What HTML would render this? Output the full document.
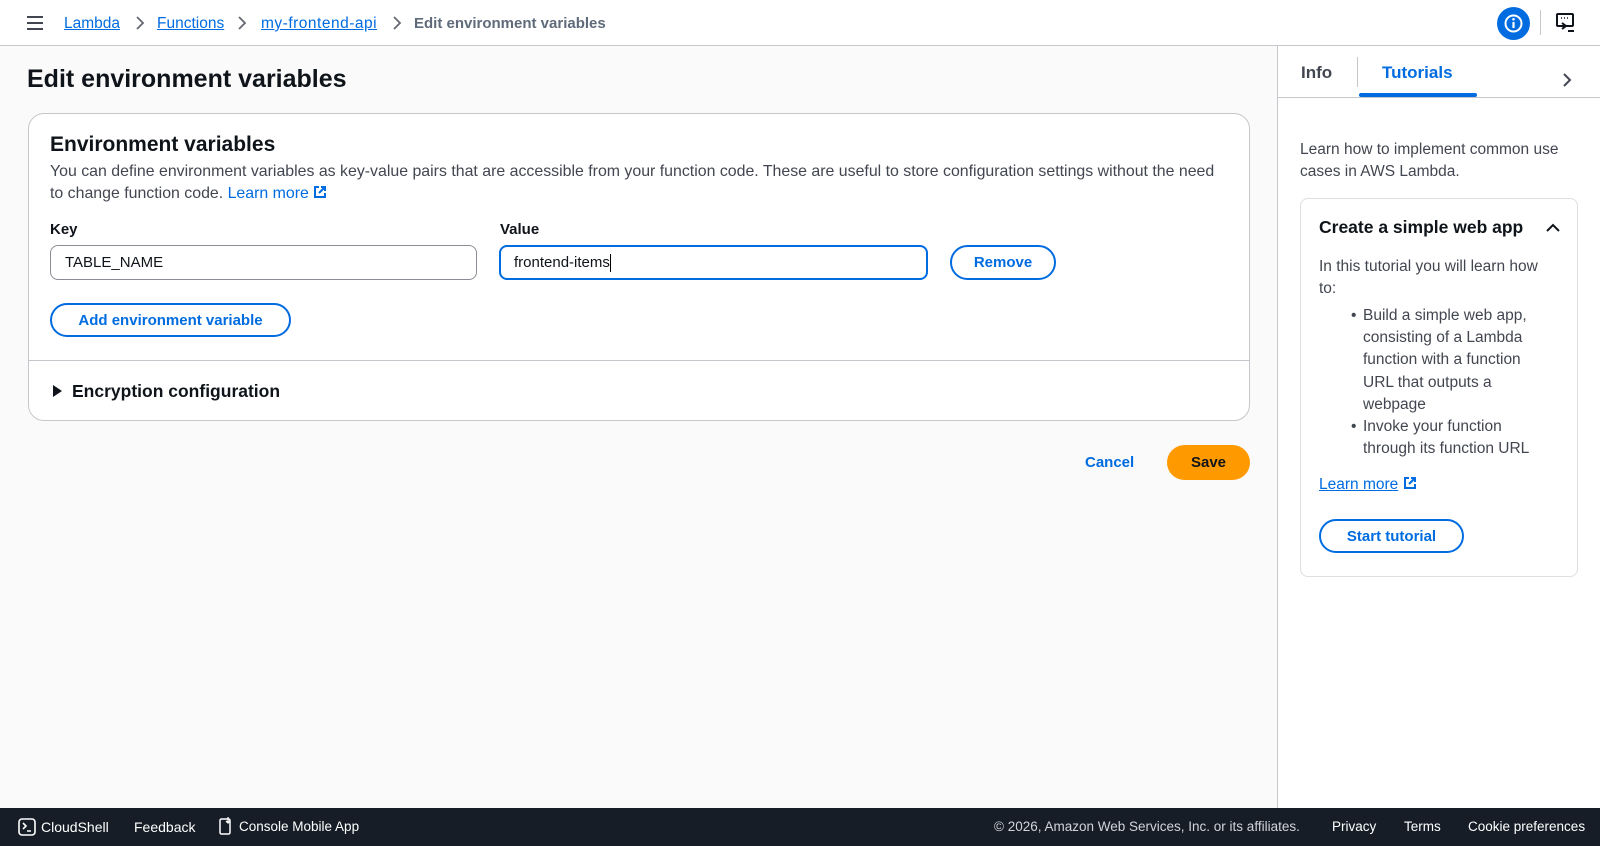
<!DOCTYPE html>
<html><head><meta charset="utf-8"><style>
*{box-sizing:border-box;margin:0;padding:0}
body{width:1600px;height:846px;overflow:hidden;background:#fafafa;font-family:"Liberation Sans",Arial,sans-serif;color:#0f141a;position:relative}
.a{position:absolute;white-space:nowrap}
.lnk{color:#006ce0;text-decoration:none}
.btn{position:absolute;border:2px solid #006ce0;border-radius:20px;color:#006ce0;font-weight:bold;font-size:15px;display:flex;align-items:center;justify-content:center;background:#fff}
.inp{position:absolute;border:1px solid #8c8c94;border-radius:8px;background:#fff;font-size:15px;padding-left:14px;display:flex;align-items:center}
.bc{position:absolute;top:15px;font-size:15.5px;color:#006ce0;text-decoration:underline}
.ch{position:absolute;top:15px}
</style></head><body>
<!-- header -->
<div class="a" style="left:0;top:0;width:1600px;height:46px;background:#fff;border-bottom:1px solid #c6c6cd"></div>
<svg class="a" style="left:26px;top:15px" width="18" height="16"><path d="M1 2h16M1 8h16M1 14h16" stroke="#424650" stroke-width="2"/></svg>
<div class="bc" style="left:64px">Lambda</div>
<svg class="ch" style="left:134px" width="12" height="16"><path d="M3 2l6 6-6 6" fill="none" stroke="#656871" stroke-width="1.8"/></svg>
<div class="bc" style="left:157px">Functions</div>
<svg class="ch" style="left:236px" width="12" height="16"><path d="M3 2l6 6-6 6" fill="none" stroke="#656871" stroke-width="1.8"/></svg>
<div class="bc" style="left:261px;letter-spacing:0.5px">my-frontend-api</div>
<svg class="ch" style="left:391px" width="12" height="16"><path d="M3 2l6 6-6 6" fill="none" stroke="#656871" stroke-width="1.8"/></svg>
<div class="a" style="left:414px;top:15px;font-size:15px;font-weight:bold;color:#5f6b7a">Edit environment variables</div>
<div class="a" style="left:1497px;top:7px;width:33px;height:33px;border-radius:50%;background:#006ce0"></div>
<svg class="a" style="left:1503px;top:13px" width="21" height="21"><circle cx="10.5" cy="10.5" r="8" fill="none" stroke="#fff" stroke-width="2"/><path d="M10.5 9v6" stroke="#fff" stroke-width="2.2"/><circle cx="10.5" cy="6.3" r="1.3" fill="#fff"/></svg>
<div class="a" style="left:1540px;top:10px;width:1px;height:25px;background:#c6c6cd"></div>
<svg class="a" style="left:1556px;top:13px" width="20" height="20"><rect x="1" y="1" width="16" height="12" rx="1" fill="none" stroke="#0f141a" stroke-width="2"/><path d="M5 5h1M8 5h1M11 5h1" stroke="#0f141a" stroke-width="1.5"/><path d="M6 10l4 3-4 3" fill="none" stroke="#0f141a" stroke-width="2"/><path d="M12 18h6" stroke="#0f141a" stroke-width="2"/></svg>

<!-- title -->
<div class="a" style="left:27px;top:65px;font-size:25px;font-weight:bold">Edit environment variables</div>

<!-- card -->
<div class="a" style="left:28px;top:113px;width:1222px;height:308px;border:1px solid #c6c6cd;border-radius:16px;background:#fff"></div>
<div class="a" style="left:50px;top:133px;font-size:21px;font-weight:bold">Environment variables</div>
<div class="a" style="left:50px;top:161px;font-size:15.9px;line-height:22px;color:#424650">You can define environment variables as key-value pairs that are accessible from your function code. These are useful to store configuration settings without the need<br>to change function code. <span class="lnk">Learn more <svg width="14" height="14" style="vertical-align:-1px"><path d="M6 2H2v10h10V8M8 2h4v4M12 2L6 8" fill="none" stroke="#006ce0" stroke-width="2"/></svg></span></div>
<div class="a" style="left:50px;top:221px;font-size:15px;font-weight:bold">Key</div>
<div class="a" style="left:500px;top:221px;font-size:15px;font-weight:bold">Value</div>
<div class="inp" style="left:50px;top:245px;width:427px;height:35px">TABLE_NAME</div>
<div class="inp" style="left:499px;top:245px;width:429px;height:35px;border:2px solid #006ce0;padding-left:13px">frontend-items<span style="display:inline-block;width:1px;height:18px;background:#000"></span></div>
<div class="btn" style="left:950px;top:245px;width:106px;height:35px">Remove</div>
<div class="btn" style="left:50px;top:303px;width:241px;height:34px">Add environment variable</div>
<div class="a" style="left:29px;top:360px;width:1220px;height:1px;background:#c6c6cd"></div>
<svg class="a" style="left:52px;top:385px" width="10" height="12"><path d="M1 0l9 6-9 6z" fill="#0f141a"/></svg>
<div class="a" style="left:72px;top:381px;font-size:17.5px;font-weight:bold">Encryption configuration</div>

<div class="a" style="left:1085px;top:454px;font-size:15px;font-weight:bold;color:#006ce0">Cancel</div>
<div class="a" style="left:1167px;top:445px;width:83px;height:35px;border-radius:18px;background:#ff9900;font-size:15px;font-weight:bold;display:flex;align-items:center;justify-content:center">Save</div>

<!-- right panel -->
<div class="a" style="left:1277px;top:46px;width:323px;height:762px;background:#fff;border-left:1px solid #c6c6cd"></div>
<div class="a" style="left:1278px;top:97px;width:322px;height:1px;background:#c6c6cd"></div>
<div class="a" style="left:1301px;top:63px;font-size:17px;font-weight:bold;color:#424650">Info</div>
<div class="a" style="left:1357px;top:57px;width:1px;height:30px;background:#c6c6cd"></div>
<div class="a" style="left:1382px;top:63px;font-size:17px;font-weight:bold;color:#006ce0">Tutorials</div>
<div class="a" style="left:1359px;top:93px;width:118px;height:4px;border-radius:2px;background:#006ce0"></div>
<svg class="a" style="left:1561px;top:72px" width="12" height="16"><path d="M3 2l6 6-6 6" fill="none" stroke="#424650" stroke-width="2"/></svg>
<div class="a" style="left:1300px;top:139px;font-size:15.5px;line-height:22.4px;color:#424650">Learn how to implement common use<br>cases in AWS Lambda.</div>
<div class="a" style="left:1300px;top:198px;width:278px;height:379px;border:1px solid #dedee3;border-radius:8px;background:#fff"></div>
<div class="a" style="left:1319px;top:217px;font-size:17.5px;font-weight:bold">Create a simple web app</div>
<svg class="a" style="left:1545px;top:222px" width="16" height="12"><path d="M2 9l6-6 6 6" fill="none" stroke="#0f141a" stroke-width="2"/></svg>
<div class="a" style="left:1319px;top:256px;font-size:15.5px;line-height:22.2px;color:#424650">In this tutorial you will learn how<br>to:</div>
<div class="a" style="left:1363px;top:305px;font-size:15.5px;line-height:22.2px;color:#424650">
<span style="position:absolute;left:-12px;top:0">•</span>Build a simple web app,<br>consisting of a Lambda<br>function with a function<br>URL that outputs a<br>webpage<br>
<span style="position:absolute;left:-12px;top:111px">•</span>Invoke your function<br>through its function URL</div>
<div class="a" style="left:1319px;top:476px;font-size:15.5px;color:#006ce0"><span style="text-decoration:underline">Learn more</span> <svg width="14" height="14" style="vertical-align:-1px"><path d="M6 2H2v10h10V8M8 2h4v4M12 2L6 8" fill="none" stroke="#006ce0" stroke-width="2"/></svg></div>
<div class="btn" style="left:1319px;top:519px;width:145px;height:34px">Start tutorial</div>

<!-- footer -->
<div class="a" style="left:0;top:808px;width:1600px;height:38px;background:#161d26"></div>
<svg class="a" style="left:18px;top:818px" width="18" height="18"><rect x="1" y="1" width="16" height="16" rx="3" fill="none" stroke="#fff" stroke-width="1.6"/><path d="M5 5l3 3-3 3M9 13h4" fill="none" stroke="#fff" stroke-width="1.6"/></svg>
<div class="a" style="left:41px;top:819px;font-size:14px;color:#fff">CloudShell</div>
<div class="a" style="left:134px;top:819px;font-size:14px;color:#fff">Feedback</div>
<svg class="a" style="left:219px;top:816px" width="14" height="20"><rect x="1" y="3" width="10" height="15" rx="1.5" fill="none" stroke="#fff" stroke-width="1.5"/><path d="M9 1v6M7 5l2 2 2-2" fill="none" stroke="#fff" stroke-width="1.3"/></svg>
<div class="a" style="left:239px;top:819px;font-size:13.5px;color:#fff">Console Mobile App</div>
<div class="a" style="left:994px;top:819px;font-size:13.5px;color:#d1d5db">© 2026, Amazon Web Services, Inc. or its affiliates.</div>
<div class="a" style="left:1332px;top:819px;font-size:13.5px;color:#fff">Privacy</div>
<div class="a" style="left:1404px;top:819px;font-size:13.5px;color:#fff">Terms</div>
<div class="a" style="left:1468px;top:819px;font-size:13.5px;color:#fff">Cookie preferences</div>
</body></html>
